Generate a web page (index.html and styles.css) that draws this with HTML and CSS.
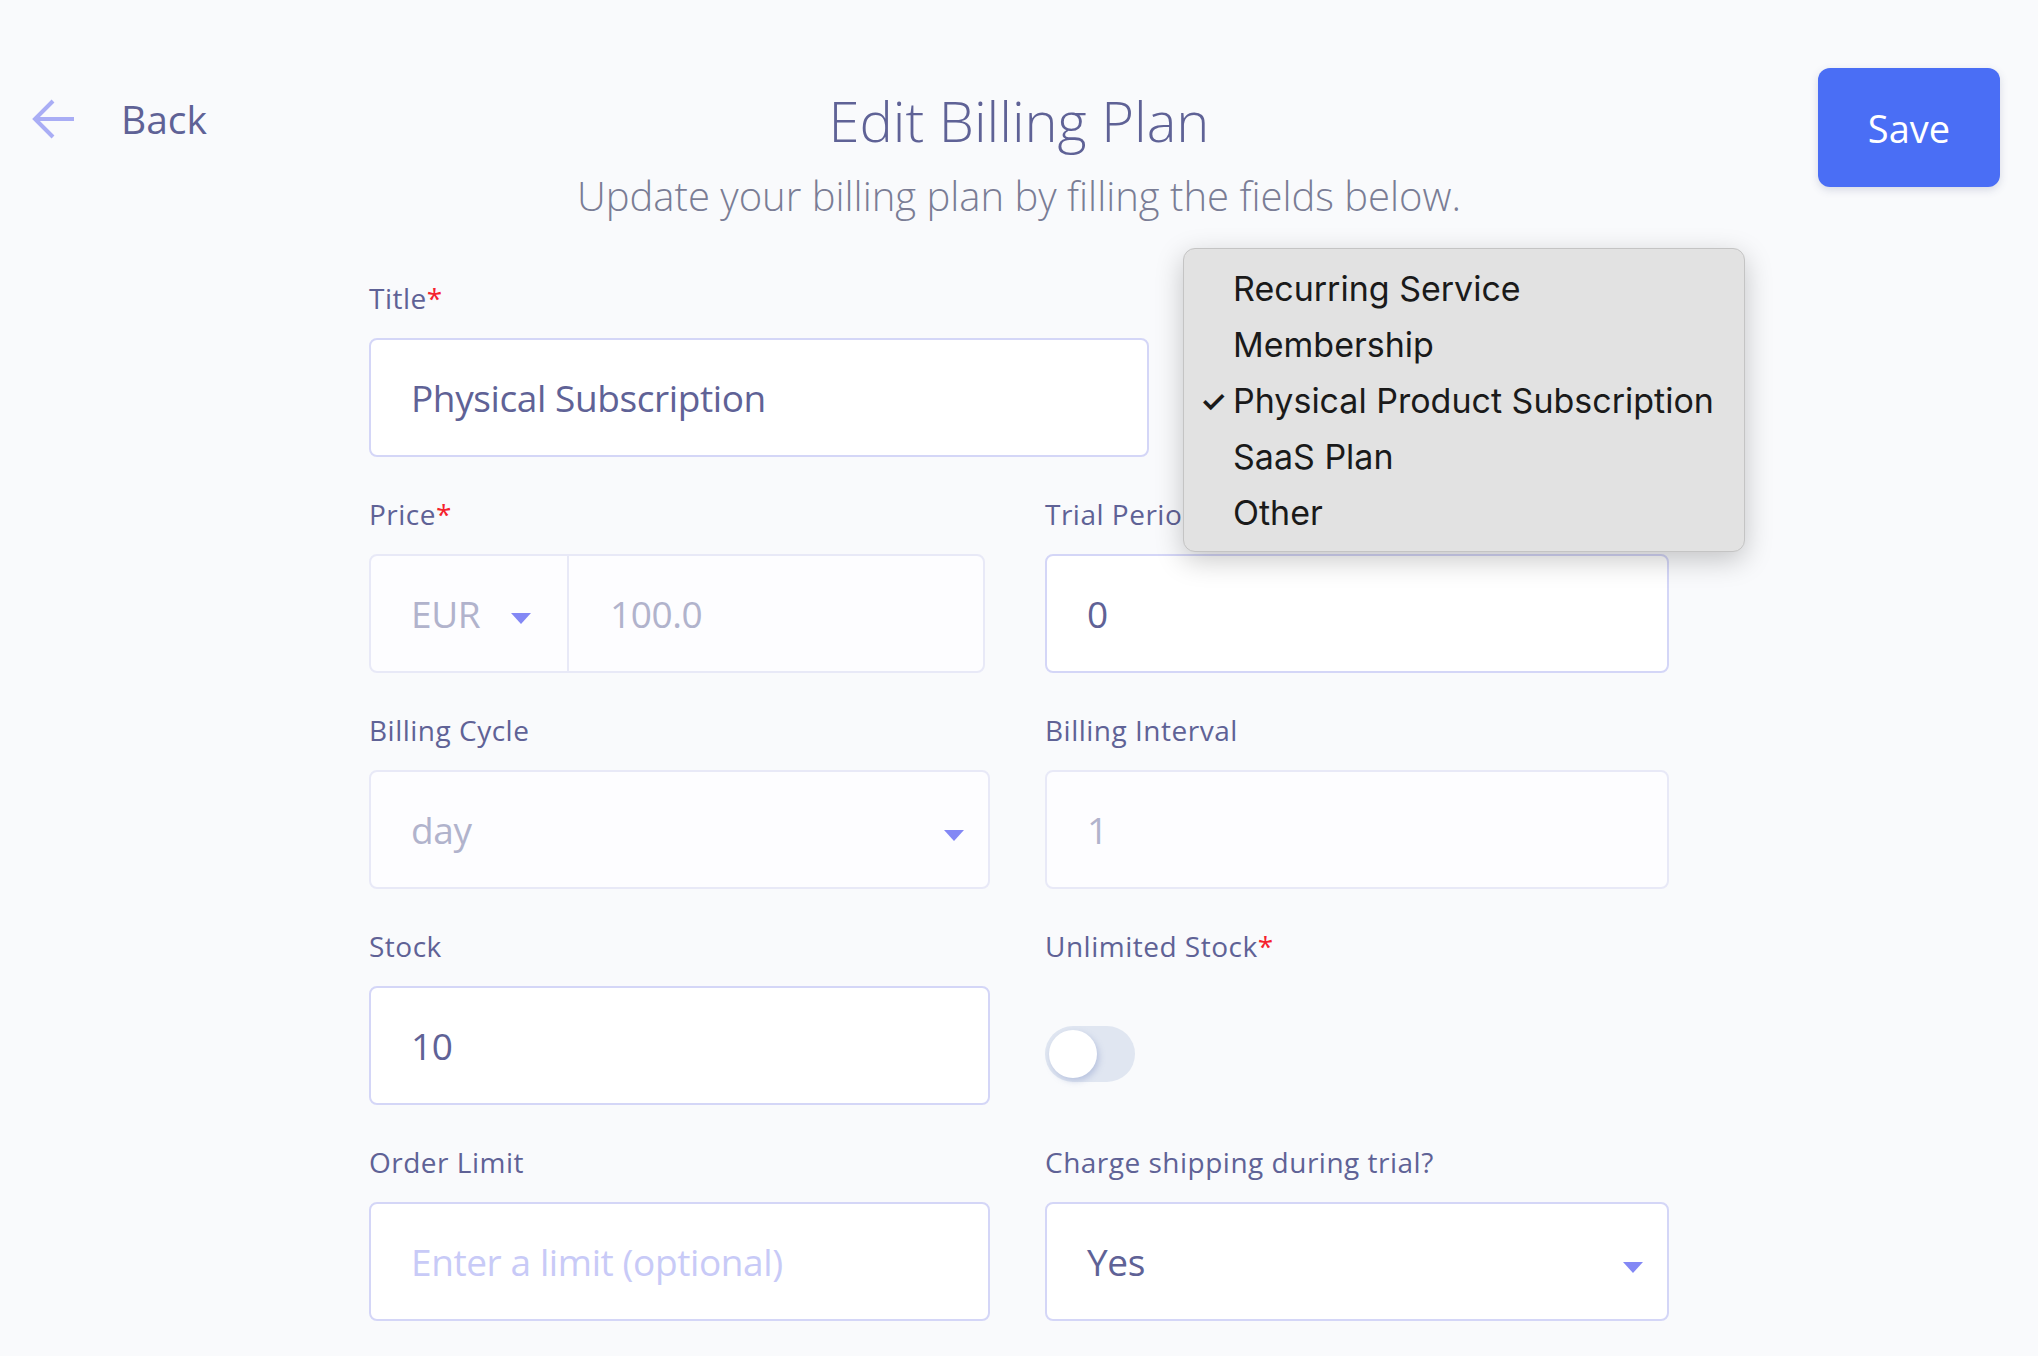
FILE: index.html
```html
<!DOCTYPE html>
<html lang="en">
<head>
<meta charset="utf-8">
<title>Edit Billing Plan</title>
<link rel="stylesheet" href="styles.css">
</head>
<body>
<header class="top">
  <a class="back" href="#">
    <svg class="back-icon" width="46" height="46" viewBox="0 0 46 46" aria-hidden="true">
      <path d="M44 23 H5 M23 5 L5 23 L23 41" fill="none" stroke="#a9adf5" stroke-width="4" stroke-linecap="butt" stroke-linejoin="miter"/>
    </svg>
    <span class="back-text">Back</span>
  </a>
  <div class="heading">
    <h1 class="title">Edit Billing Plan</h1>
    <p class="subtitle">Update your billing plan by filling the fields below.</p>
  </div>
  <div class="actions">
    <button class="save" type="button">Save</button>
  </div>
</header>

<main class="form">
  <div class="field field-title">
    <label class="label">Title<span class="req">*</span></label>
    <div class="input active"><span class="value">Physical Subscription</span></div>
  </div>

  <div class="field">
    <label class="label">Price<span class="req">*</span></label>
    <div class="input disabled price">
      <div class="currency"><span class="muted">EUR</span><span class="caret"></span></div>
      <div class="amount"><span class="muted">100.0</span></div>
    </div>
  </div>
  <div class="field">
    <label class="label">Trial Period</label>
    <div class="input active"><span class="value">0</span></div>
  </div>

  <div class="field">
    <label class="label">Billing Cycle</label>
    <div class="input disabled select"><span class="muted">day</span><span class="caret"></span></div>
  </div>
  <div class="field">
    <label class="label">Billing Interval</label>
    <div class="input disabled"><span class="muted">1</span></div>
  </div>

  <div class="field">
    <label class="label">Stock</label>
    <div class="input active"><span class="value">10</span></div>
  </div>
  <div class="field">
    <label class="label">Unlimited Stock<span class="req">*</span></label>
    <div class="toggle-wrap"><span class="toggle"><span class="knob"></span></span></div>
  </div>

  <div class="field">
    <label class="label">Order Limit</label>
    <div class="input active"><span class="placeholder">Enter a limit (optional)</span></div>
  </div>
  <div class="field">
    <label class="label">Charge shipping during trial?</label>
    <div class="input active select"><span class="value">Yes</span><span class="caret"></span></div>
  </div>

  <ul class="menu">
    <li class="menu-item">Recurring Service</li>
    <li class="menu-item">Membership</li>
    <li class="menu-item checked"><span class="check">✓</span>Physical Product Subscription</li>
    <li class="menu-item">SaaS Plan</li>
    <li class="menu-item">Other</li>
  </ul>
</main>
</body>
</html>
```

FILE: styles.css
```css
* { box-sizing: border-box; }

html, body {
  margin: 0;
  padding: 0;
}

body {
  background: #f9fafc;
  font-family: "Open Sans", "Liberation Sans", sans-serif;
  color: #5f6296;
  width: 2038px;
  height: 1356px;
  overflow: hidden;
}

.top {
  display: grid;
  grid-template-columns: 1fr auto 1fr;
  align-items: start;
  padding: 0 30px;
}

.back {
  display: flex;
  align-items: center;
  gap: 45px;
  margin-top: 95px;
  text-decoration: none;
  color: #5f6296;
  justify-self: start;
}

.back-icon { display: block; flex: none; }

.back-text {
  font-size: 39px;
  line-height: 46px;
  padding-top: 1px;
}

.heading {
  text-align: center;
  padding-top: 87px;
}

.title {
  margin: 0;
  font-size: 56px;
  font-weight: 300;
  line-height: 67px;
  color: #5f6296;
}

.subtitle {
  margin: 19px 0 0;
  font-size: 40px;
  font-weight: 300;
  line-height: 46px;
  color: #7a7d95;
}

.actions {
  justify-self: end;
  margin-top: 68px;
  margin-right: 8px;
}

.save {
  width: 182px;
  height: 119px;
  border: none;
  border-radius: 12px;
  background: #4a6ef5;
  color: #fff;
  font-family: "Open Sans", "Liberation Sans", sans-serif;
  font-size: 38px;
  box-shadow: 0 3px 8px rgba(60, 70, 120, 0.18);
}

.form {
  position: relative;
  width: 1300px;
  margin: 59px auto 0;
  display: grid;
  grid-template-columns: minmax(0, 621px) minmax(0, 624px);
  column-gap: 55px;
  row-gap: 37px;
}

.field { display: flex; flex-direction: column; gap: 20px; min-width: 0; }

.field-title { grid-column: 1 / -1; }
.field-title .input { width: 780px; }

.label {
  font-size: 28px;
  line-height: 40px;
  letter-spacing: 0.5px;
  color: #5f6296;
}

.req { color: #f5222d; }

.input {
  height: 119px;
  border: 2px solid #d4d6f7;
  border-radius: 8px;
  background: #fff;
  display: flex;
  align-items: center;
  padding: 0 40px;
  font-size: 37px;
  letter-spacing: -0.4px;
  position: relative;
}

.input.disabled {
  border-color: #e8e9f7;
  background: #fdfdff;
}

.value { color: #5f6296; }
.muted { color: #b1b3cc; }
.placeholder { color: #c8caf7; }

.price {
  padding: 0;
  width: 616px;
}

.currency {
  width: 198px;
  height: 100%;
  display: flex;
  align-items: center;
  padding-left: 40px;
  border-right: 2px solid #e8e9f7;
}

.currency .caret {
  margin-left: 31px;
  margin-top: 10px;
}

.amount {
  padding-left: 41px;
  display: flex;
  align-items: center;
}

.caret {
  display: inline-block;
  width: 0;
  height: 0;
  border-left: 10px solid transparent;
  border-right: 10px solid transparent;
  border-top: 11px solid #8388f5;
}

.select { justify-content: space-between; padding-right: 24px; }
.select .caret { margin-top: 12px; }

.toggle-wrap {
  height: 119px;
  display: flex;
  align-items: flex-start;
  padding-top: 40px;
}

.toggle {
  display: block;
  width: 90px;
  height: 56px;
  border-radius: 28px;
  background: #e0e6f1;
  position: relative;
  padding: 4px;
}

.knob {
  display: block;
  width: 48px;
  height: 48px;
  border-radius: 50%;
  background: #fff;
  box-shadow: 2px 3px 6px rgba(110, 130, 190, 0.35);
}

.menu {
  position: absolute;
  left: 814px;
  top: -30px;
  width: 562px;
  margin: 0;
  padding: 12px 0 10px 49px;
  list-style: none;
  background: #e2e2e2;
  border: 1px solid #c4c4c4;
  border-radius: 12px;
  box-shadow: 0 8px 28px rgba(0, 0, 0, 0.22);
  font-family: "Inter", "Roboto", "Liberation Sans", sans-serif;
  font-size: 34px;
  color: #1a1a1a;
  z-index: 5;
}

.menu-item {
  position: relative;
  line-height: 56px;
  height: 56px;
}

.check {
  position: absolute;
  left: -33px;
  top: 0;
  font-size: 30px;
  font-weight: 600;
}
```
